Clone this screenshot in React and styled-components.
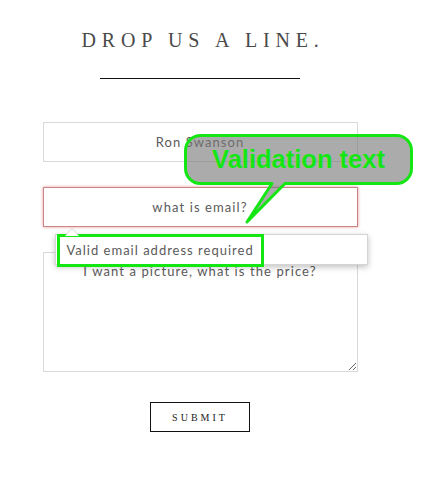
import styled, { createGlobalStyle } from 'styled-components';

const GlobalStyle = createGlobalStyle`
	body {
		margin: 0;
		background: #ffffff;
		font-family: 'Lato', 'Open Sans', sans-serif;
	}
`;

const Page = styled.div`
	position: relative;
	width: 400px;
	height: 483px;
	padding-top: 28px;
	box-sizing: border-box;
	display: flex;
	flex-direction: column;
	align-items: center;
`;

const Title = styled.h2`
	margin: 0;
	padding-left: 6px;
	font-family: 'Liberation Serif', 'DejaVu Serif', serif;
	font-size: 20px;
	font-weight: normal;
	letter-spacing: 5.8px;
	line-height: 24px;
	color: #4a4a4a;
`;

const Rule = styled.div`
	width: 200px;
	height: 1px;
	margin-top: 26px;
	background: #111111;
`;

const Form = styled.form`
	width: 315px;
	margin-top: 43px;
	display: flex;
	flex-direction: column;
	gap: 25px;
`;

const Field = styled.div`
	position: relative;
`;

const Input = styled.input`
	display: block;
	width: 100%;
	height: 40px;
	box-sizing: border-box;
	border: 1px solid ${(p) => (p.$invalid ? '#c98585' : '#d9d9d9')};
	box-shadow: ${(p) => (p.$invalid ? '0 0 3px rgba(210, 70, 70, 0.55)' : 'none')};
	outline: none;
	background: #ffffff;
	text-align: center;
	font-family: 'Lato', 'Open Sans', sans-serif;
	font-size: 13px;
	letter-spacing: 1.1px;
	color: #5a5a5a;
`;

const Message = styled.textarea`
	display: block;
	width: 100%;
	height: 120px;
	box-sizing: border-box;
	padding: 10px 12px;
	border: 1px solid #d9d9d9;
	outline: none;
	text-align: center;
	font-family: 'Lato', 'Open Sans', sans-serif;
	font-size: 13px;
	letter-spacing: 1.1px;
	color: #5a5a5a;
`;

const Tooltip = styled.div`
	position: absolute;
	top: 47px;
	left: 12px;
	z-index: 2;
	width: 313px;
	height: 31px;
	box-sizing: border-box;
	padding-left: 11px;
	display: flex;
	align-items: center;
	background: #ffffff;
	border: 1px solid #d4d4d4;
	box-shadow: 0 2px 6px rgba(0, 0, 0, 0.25);
	font-size: 13px;
	letter-spacing: 1px;
	color: #5a5a5a;

	&::before,
	&::after {
		content: '';
		position: absolute;
		left: 9px;
		width: 0;
		height: 0;
		border-left: 7px solid transparent;
		border-right: 7px solid transparent;
	}
	&::before {
		top: -7px;
		border-bottom: 7px solid #d4d4d4;
	}
	&::after {
		top: -6px;
		border-bottom: 7px solid #ffffff;
	}
`;

const Highlight = styled.span`
	position: absolute;
	left: 1px;
	top: -1px;
	width: 207px;
	height: 33px;
	box-sizing: border-box;
	border: 3.5px solid #14e614;
	pointer-events: none;
`;

const Actions = styled.div`
	display: flex;
	justify-content: center;
	padding-top: 5px;
`;

const Submit = styled.button`
	width: 100px;
	height: 30px;
	border: 1px solid #111111;
	background: #ffffff;
	font-family: 'Liberation Serif', 'DejaVu Serif', serif;
	font-size: 10px;
	letter-spacing: 3px;
	padding-left: 6px;
	color: #222222;
	cursor: pointer;
`;

const Callout = styled.svg`
	position: absolute;
	left: 184px;
	top: 134px;
	z-index: 3;
	overflow: visible;
`;

const CalloutText = styled.text`
	font-family: 'Liberation Sans', Arial, sans-serif;
	font-size: 25.5px;
	font-weight: bold;
	fill: #14e614;
`;

const App = () => {
	return (
		<>
			<GlobalStyle />
			<Page>
				<Title>DROP US A LINE.</Title>
				<Rule />
				<Form>
					<Input defaultValue="Ron Swanson" />
					<Field>
						<Input $invalid defaultValue="what is email?" />
						<Tooltip>
							Valid email address required
							<Highlight />
						</Tooltip>
					</Field>
					<Message defaultValue="I want a picture, what is the price?" />
					<Actions>
						<Submit type="button">SUBMIT</Submit>
					</Actions>
				</Form>
				<Callout width="229" height="90" viewBox="0 0 229 90">
					<path
						d="M16.5 1.5 H212.5 A15 15 0 0 1 227.5 16.5 V34.5 A15 15 0 0 1 212.5 49.5 H101 L63 88 L88 49.5 H16.5 A15 15 0 0 1 1.5 34.5 V16.5 A15 15 0 0 1 16.5 1.5 Z"
						fill="rgba(120, 120, 120, 0.62)"
						stroke="#14e614"
						strokeWidth="3"
						strokeLinejoin="round"
					/>
					<CalloutText x="114.5" y="34" textAnchor="middle">
						Validation text
					</CalloutText>
				</Callout>
			</Page>
		</>
	);
};

export default App;
